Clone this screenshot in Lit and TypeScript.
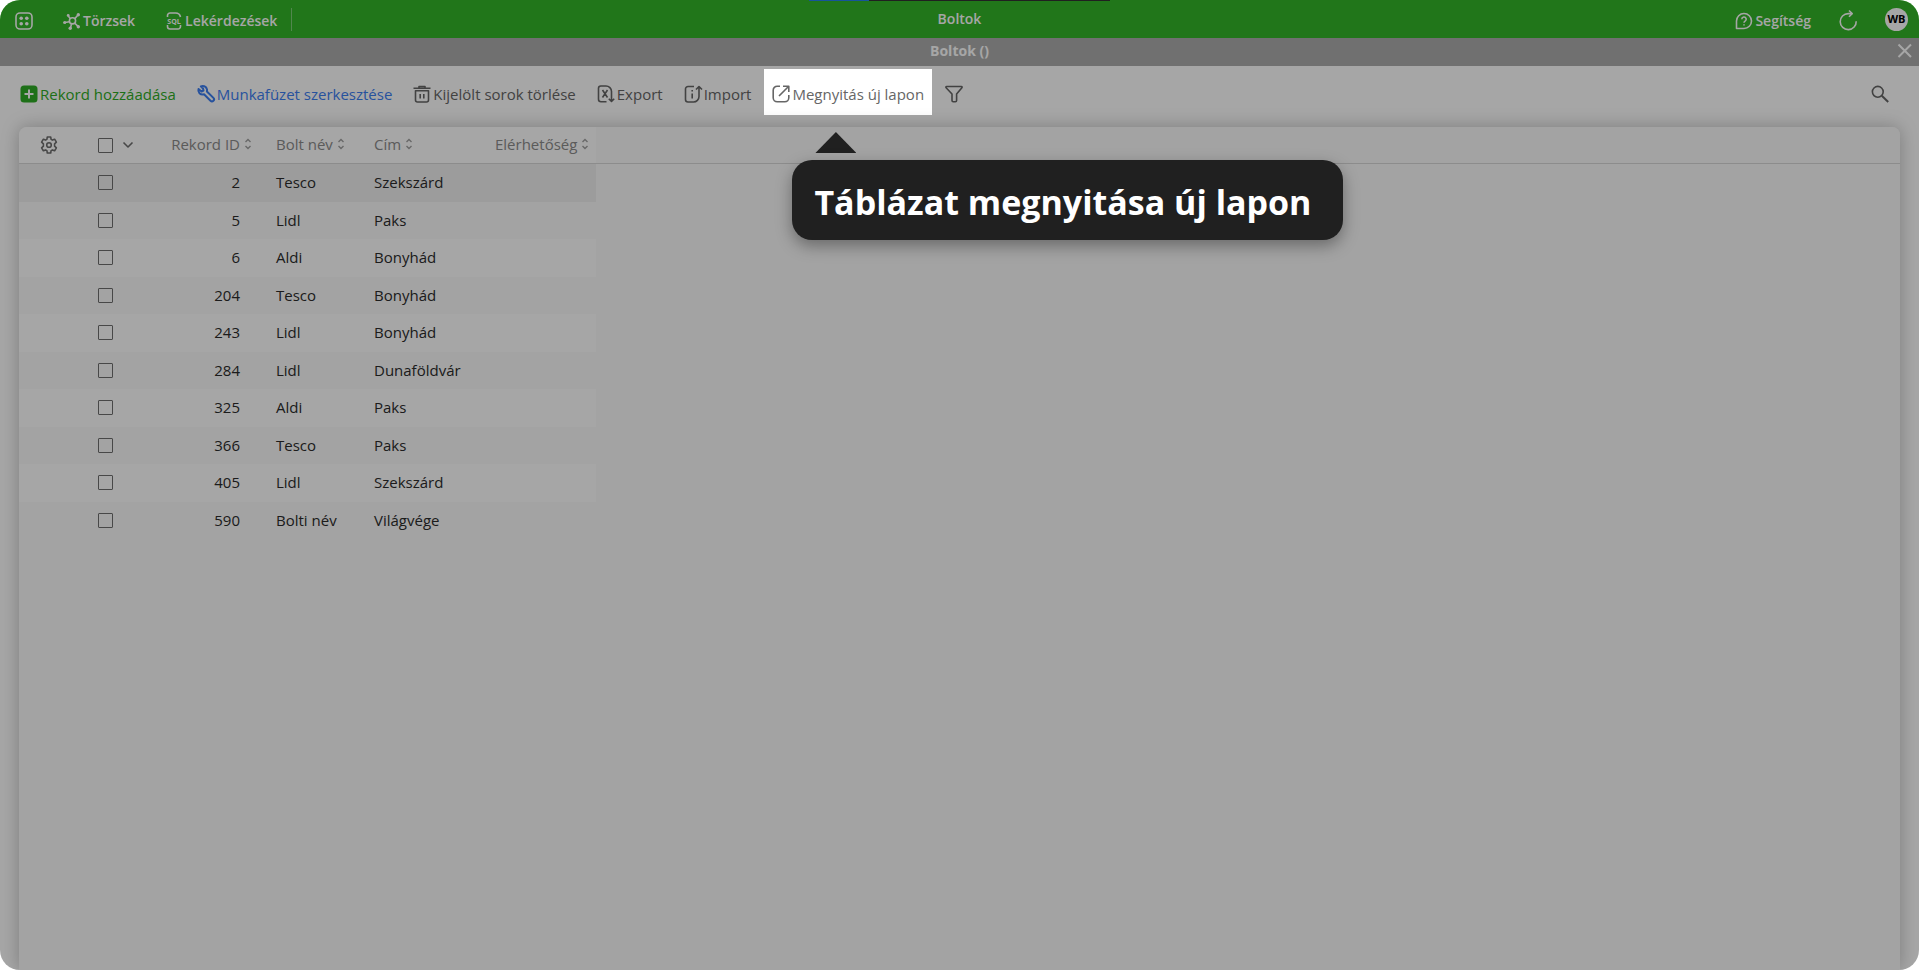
import { LitElement, html, css, svg, nothing, TemplateResult } from "lit";
import { customElement, property } from "lit/decorators.js";

interface Shop {
  id: number;
  name: string;
  city: string;
}

const SHOPS: Shop[] = [
  { id: 2, name: "Tesco", city: "Szekszárd" },
  { id: 5, name: "Lidl", city: "Paks" },
  { id: 6, name: "Aldi", city: "Bonyhád" },
  { id: 204, name: "Tesco", city: "Bonyhád" },
  { id: 243, name: "Lidl", city: "Bonyhád" },
  { id: 284, name: "Lidl", city: "Dunaföldvár" },
  { id: 325, name: "Aldi", city: "Paks" },
  { id: 366, name: "Tesco", city: "Paks" },
  { id: 405, name: "Lidl", city: "Szekszárd" },
  { id: 590, name: "Bolti név", city: "Világvége" },
];

// All glyphs share an 18 × 18 grid and are stroked with the current colour.
const ICONS: Record<string, TemplateResult> = {
  apps: svg`<rect x="1" y="1" width="16" height="16" rx="4"/>
    <g fill="currentColor" stroke="none"><circle cx="6.2" cy="6.2" r="1.8"/><circle cx="11.8" cy="6.2" r="1.8"/>
    <circle cx="6.2" cy="11.8" r="1.8"/><circle cx="11.8" cy="11.8" r="1.8"/></g>`,
  hub: svg`<circle cx="9.5" cy="8.800" r="3.100"/><path d="M11.800 6.600 15 3M7.200 6.600 5.500 4.200M6.400 9.800 2 10.500M8.500 12l-1 4M11.600 11l3.400 3.400"/>
    <g fill="currentColor" stroke="none"><circle cx="15.300" cy="2.700" r="1.700"/><circle cx="5.200" cy="3.500" r="1.400"/>
    <circle cx="1.700" cy="10.500" r="1.600"/><circle cx="7.200" cy="16.300" r="1.700"/><circle cx="15.300" cy="14.700" r="1.700"/></g>`,
  sql: svg`<path d="M2.500 5V3.500a2.500 2.500 0 0 1 2.500-2.500h5.500a5 5 0 0 1 5 4M2.500 13v1.500a2.500 2.500 0 0 0 2.500 2.500h8a2.500 2.500 0 0 0 2.500-2.500V13"/>
    <text x="9" y="11.500" text-anchor="middle" font-size="7" font-weight="700" fill="currentColor" stroke="none">SQL</text>`,
  help: svg`<path d="M1.500 16.500V9A7.500 7.500 0 1 1 9 16.500z"/><path d="M6.800 7.200a2.200 2.200 0 1 1 3.300 1.900c-.8.500-1.100.8-1.100 1.700"/><path d="M9 12.300v1.200"/>`,
  refresh: svg`<path d="M17.200 9.200A8 8 0 1 1 9.200 1.600H13"/><path d="M10-1.500 13.200 1.600 10 4.800"/>`,
  plus: svg`<rect x="0.500" y="0.500" width="17" height="17" rx="3.500" fill="currentColor" stroke="none"/><path d="M9 4.500v9M4.500 9h9" stroke="#fff" stroke-width="2"/>`,
  wrench: svg`<path stroke-width="2" d="M1.500 4 4.500 6.500 6.500 5.500 6 3.500 3.800 1.400C6 .6 8.700 1.300 9.700 3.500c.5 1 .5 2 .2 3l6.500 6.400a2 2 0 0 1-2.900 2.900L7 9.300c-1.600.5-3.300.1-4.500-1.100C1.400 7 1 5.500 1.500 4z"/>`,
  trash: svg`<path d="M.5 3.200h17M6 2.800V1.500h6v1.300M2.500 5.800h13V15a2 2 0 0 1-2 2h-9a2 2 0 0 1-2-2zM7.200 9v4.500M10.800 9v4.500"/>`,
  exportFile: svg`<path d="M9.500 16.800H4a2.500 2.500 0 0 1-2.500-2.500v-11A2.300 2.300 0 0 1 3.800 1H9a5.500 5.500 0 0 1 5.500 5.500V16M11.800 13.800l2.700 2.700 2.700-2.700M5.500 5l5 7.500M10.500 5l-5 7.500"/>`,
  importFile: svg`<path d="M10 1.500H4A2.500 2.500 0 0 0 1.500 4v10.500A2.500 2.500 0 0 0 4 17h5.500a5.500 5.500 0 0 0 5.500-5.500V2M12 4.500l3-3 3 3M8.200 8.500v5M8.200 5v1.500"/>`,
  open: svg`<path d="M8 1.200H5.200a4 4 0 0 0-4 4v7.600a4 4 0 0 0 4 4h7.600a4 4 0 0 0 4-4V10M11 1.200h5.800V7M16.500 1.500 7 11"/>`,
  filter: svg`<path d="M1.600 1.500h14.800a.7.700 0 0 1 .5 1.200L11.600 9v6.600a1.200 1.200 0 0 1-1.200 1.200H8.200a1.200 1.200 0 0 1-1.200-1.200V9L1.100 2.700a.7.700 0 0 1 .5-1.200z"/>`,
  search: svg`<circle cx="6.800" cy="6.800" r="5.400"/><path stroke-width="2" d="m10.800 10.800 6.400 6.200"/>`,
  close: svg`<path stroke-width="2" d="m2.500 2.500 12.500 12.500M15 2.500 2.500 15"/>`,
  gear: svg`<circle cx="9" cy="9" r="2.300"/><path d="M6.900 3.400 7.300 1h3.400l.4 2.400 1.300.7 2.200-.9 1.800 3-1.800 1.600v2.400l1.800 1.600-1.800 3-2.200-.9-1.300.7-.4 2.400H7.300l-.4-2.400-1.300-.7-2.200.9-1.800-3 1.800-1.600V7.800L1.600 6.200l1.800-3 2.200.9z"/>`,
  chevron: svg`<path d="m4.500 6.500 4.500 4.500 4.500-4.500"/>`,
};

@customElement("ui-icon")
export class UiIcon extends LitElement {
  @property() name = "";

  static styles = css`
    :host {
      display: inline-flex;
      flex: none;
      width: 18px;
      height: 18px;
    }
    svg {
      display: block;
      width: 100%;
      height: 100%;
      overflow: visible;
      fill: none;
      stroke: currentColor;
      stroke-width: 1.6;
      stroke-linejoin: round;
      font-family: "Open Sans", sans-serif;
    }
  `;

  render() {
    return html`<svg viewBox="0 0 18 18" aria-hidden="true">${ICONS[this.name] ?? nothing}</svg>`;
  }
}

@customElement("shop-table")
export class ShopTable extends LitElement {
  @property({ attribute: false }) rows: Shop[] = [];

  static styles = css`
    :host {
      display: block;
    }
    table {
      width: 100%;
      table-layout: fixed;
      border-collapse: separate;
      border-spacing: 0;
      font-size: 15px;
      line-height: 20px;
      color: #2c2c2c;
    }
    th,
    td {
      box-sizing: border-box;
      padding: 0 18px 2px;
      text-align: left;
      white-space: nowrap;
      background: #fff;
    }
    th {
      height: 37px;
      font-weight: 400;
      color: #8c8c8c;
      border-bottom: 1px solid #d8d8d8;
    }
    th:first-child {
      border-top-left-radius: 8px;
    }
    td {
      height: 37px;
    }
    tr:nth-child(odd) td {
      height: 38px;
    }
    tr:nth-child(even) td {
      background: #fafafa;
    }
    tbody tr:first-child td {
      background: #f0f0f0;
    }
    tr .rest,
    tbody tr:nth-child(n) .rest {
      background: #fafafa;
      border-top-right-radius: 8px;
    }
    .c-tool {
      width: 60px;
    }
    .c-check {
      width: 65px;
    }
    .c-id {
      width: 114px;
    }
    .c-name {
      width: 98px;
    }
    .c-city {
      width: 121px;
    }
    .c-contact {
      width: 119px;
    }
    .tool,
    .check {
      padding: 0;
    }
    td.check {
      padding-bottom: 1px;
    }
    .id {
      text-align: right;
    }
    .tool button {
      display: flex;
      margin-left: 21px;
    }
    .pick {
      display: flex;
      align-items: center;
      gap: 6px;
    }
    .pick button {
      width: 18px;
    }
    .sortable {
      display: inline-flex;
      align-items: center;
      gap: 4px;
      color: inherit;
    }
    th.id {
      padding-right: 6px;
    }
    th.contact {
      padding-right: 0;
    }
    button {
      display: inline-flex;
      align-items: center;
      padding: 0;
      border: 0;
      background: none;
      font: inherit;
      color: #6f6f6f;
    }
    .sort {
      width: 8px;
      height: 12px;
      fill: none;
      stroke: #a0a0a0;
      stroke-width: 1.4;
    }
    input {
      appearance: none;
      display: block;
      box-sizing: border-box;
      width: 15px;
      height: 15px;
      margin: 0 0 0 19px;
      border: 1px solid #6f6f6f;
      border-radius: 1px;
    }
  `;

  private heading(label: string) {
    return html`<button class="sortable">
      ${label}<svg class="sort" viewBox="0 0 8 12" aria-hidden="true"><path d="M1.500 4 4 1.500 6.500 4M1.500 8 4 10.500 6.500 8" /></svg>
    </button>`;
  }

  render() {
    return html`<table>
      <colgroup>
        <col class="c-tool" /><col class="c-check" /><col class="c-id" /><col class="c-name" />
        <col class="c-city" /><col class="c-contact" /><col />
      </colgroup>
      <thead>
        <tr>
          <th class="tool"><button aria-label="Beállítások"><ui-icon name="gear"></ui-icon></button></th>
          <th class="check">
            <div class="pick">
              <input type="checkbox" aria-label="Összes kijelölése" />
              <button aria-label="Kijelölés"><ui-icon name="chevron"></ui-icon></button>
            </div>
          </th>
          <th class="id">${this.heading("Rekord ID")}</th>
          <th>${this.heading("Bolt név")}</th>
          <th>${this.heading("Cím")}</th>
          <th class="contact">${this.heading("Elérhetőség")}</th>
          <th class="rest"></th>
        </tr>
      </thead>
      <tbody>
        ${this.rows.map(
          (row) => html`<tr>
            <td class="tool"></td>
            <td class="check"><input type="checkbox" aria-label=${`Rekord ${row.id}`} /></td>
            <td class="id">${row.id}</td>
            <td>${row.name}</td>
            <td>${row.city}</td>
            <td></td>
            <td class="rest"></td>
          </tr>`
        )}
      </tbody>
    </table>`;
  }
}

@customElement("app-root")
export class AppRoot extends LitElement {
  static styles = css`
    :host {
      display: block;
      background: #fff;
      font-family: "Open Sans", "Noto Sans", sans-serif;
    }
    .app {
      position: relative;
      display: flex;
      flex-direction: column;
      min-height: 100vh;
      overflow: hidden;
      border-radius: 20px;
      background: #fff;
    }
    .progress {
      position: absolute;
      z-index: 6;
      top: 0;
      left: 50%;
      width: 301px;
      height: 1px;
      margin-left: -151px;
      background: linear-gradient(90deg, #17549b 20%, #202020 20%);
    }
    button,
    .link {
      display: inline-flex;
      align-items: center;
      padding: 0;
      border: 0;
      background: none;
      font: inherit;
      color: inherit;
      text-decoration: none;
      white-space: nowrap;
    }
    .bar {
      display: grid;
      grid-template-columns: 1fr auto 1fr;
      align-items: center;
      height: 38px;
      background: #33b528;
      color: #fff;
      font-size: 14px;
      font-weight: 600;
      line-height: 20px;
    }
    .side {
      display: flex;
      align-items: center;
    }
    .left {
      gap: 30px;
      padding-left: 15px;
    }
    .side .link,
    .side .icon {
      gap: 2px;
      padding-top: 3px;
    }
    .menu {
      display: flex;
      align-items: center;
      height: 23px;
      gap: 30px;
      padding-right: 14px;
      border-right: 1px solid #7fd078;
    }
    .right {
      justify-content: flex-end;
      gap: 28px;
      padding-right: 11px;
    }
    .side .avatar {
      justify-content: center;
      width: 23px;
      height: 23px;
      border-radius: 50%;
      background: #fff;
      color: #000;
      font-size: 11px;
      font-weight: 700;
    }
    .caption {
      display: grid;
      grid-template-columns: 1fr auto 1fr;
      align-items: center;
      box-sizing: border-box;
      height: 28px;
      padding: 0 5px 2px;
      background: #adadad;
      color: #fff;
    }
    .caption h1 {
      grid-column: 2;
      margin: 0;
      font-size: 14px;
      font-weight: 700;
      line-height: 20px;
    }
    .caption button {
      justify-self: end;
    }
    .tools {
      display: flex;
      align-items: center;
      gap: 5px;
      height: 46px;
      padding: 3px 22px 12px 12px;
      font-size: 15px;
      line-height: 20px;
      color: #666;
    }
    .tools button {
      gap: 2px;
      height: 46px;
      padding: 3px 8px 0;
    }
    .tools .add {
      color: #2fac25;
    }
    .tools .edit {
      color: #3d7ef2;
    }
    .tools .find {
      margin-left: auto;
    }
    .spot {
      position: relative;
      z-index: 5;
      box-shadow: 0 0 0 9999px rgba(0, 0, 0, 0.35);
    }
    .arrow {
      position: absolute;
      top: 63px;
      left: 51px;
      width: 41px;
      height: 21px;
      background: #202020;
      clip-path: polygon(50% 0, 100% 100%, 0 100%);
    }
    .tip {
      position: absolute;
      top: 91px;
      left: 28px;
      padding: 20px 32px 16px 22px;
      border-radius: 20px;
      background: #202020;
      box-shadow: 0 6px 16px rgba(0, 0, 0, 0.35);
      color: #fff;
      font-size: 34px;
      font-weight: 700;
      line-height: 44px;
      white-space: nowrap;
    }
    .panel {
      flex: 1;
      margin: 0 19px;
      border-radius: 8px 8px 0 0;
      background: #fafafa;
      box-shadow: 0 0 18px rgba(0, 0, 0, 0.25);
    }
  `;

  private tool(icon: string, label: string, kind = "") {
    return html`<button class=${kind}><ui-icon name=${icon}></ui-icon>${label}</button>`;
  }

  render() {
    return html`<div class="app">
      <div class="progress"></div>
      <header class="bar">
        <div class="side left">
          <button class="icon" aria-label="Alkalmazások"><ui-icon name="apps"></ui-icon></button>
          <nav class="menu">
            <a class="link" href="#torzsek"><ui-icon name="hub"></ui-icon>Törzsek</a>
            <a class="link" href="#lekerdezesek"><ui-icon name="sql"></ui-icon>Lekérdezések</a>
          </nav>
        </div>
        <span>Boltok</span>
        <div class="side right">
          <a class="link" href="#segitseg"><ui-icon name="help"></ui-icon>Segítség</a>
          <button class="icon" aria-label="Frissítés"><ui-icon name="refresh"></ui-icon></button>
          <button class="avatar">WB</button>
        </div>
      </header>
      <div class="caption">
        <h1>Boltok ()</h1>
        <button aria-label="Bezárás"><ui-icon name="close"></ui-icon></button>
      </div>
      <div class="tools">
        ${this.tool("plus", "Rekord hozzáadása", "add")}
        ${this.tool("wrench", "Munkafüzet szerkesztése", "edit")}
        ${this.tool("trash", "Kijelölt sorok törlése")}
        ${this.tool("exportFile", "Export")}
        ${this.tool("importFile", "Import")}
        <div class="spot">
          ${this.tool("open", "Megnyitás új lapon")}
          <div class="arrow"></div>
          <div class="tip" role="tooltip">Táblázat megnyitása új lapon</div>
        </div>
        <button aria-label="Szűrő"><ui-icon name="filter"></ui-icon></button>
        <button class="find" aria-label="Keresés"><ui-icon name="search"></ui-icon></button>
      </div>
      <main class="panel">
        <shop-table .rows=${SHOPS}></shop-table>
      </main>
    </div>`;
  }
}
